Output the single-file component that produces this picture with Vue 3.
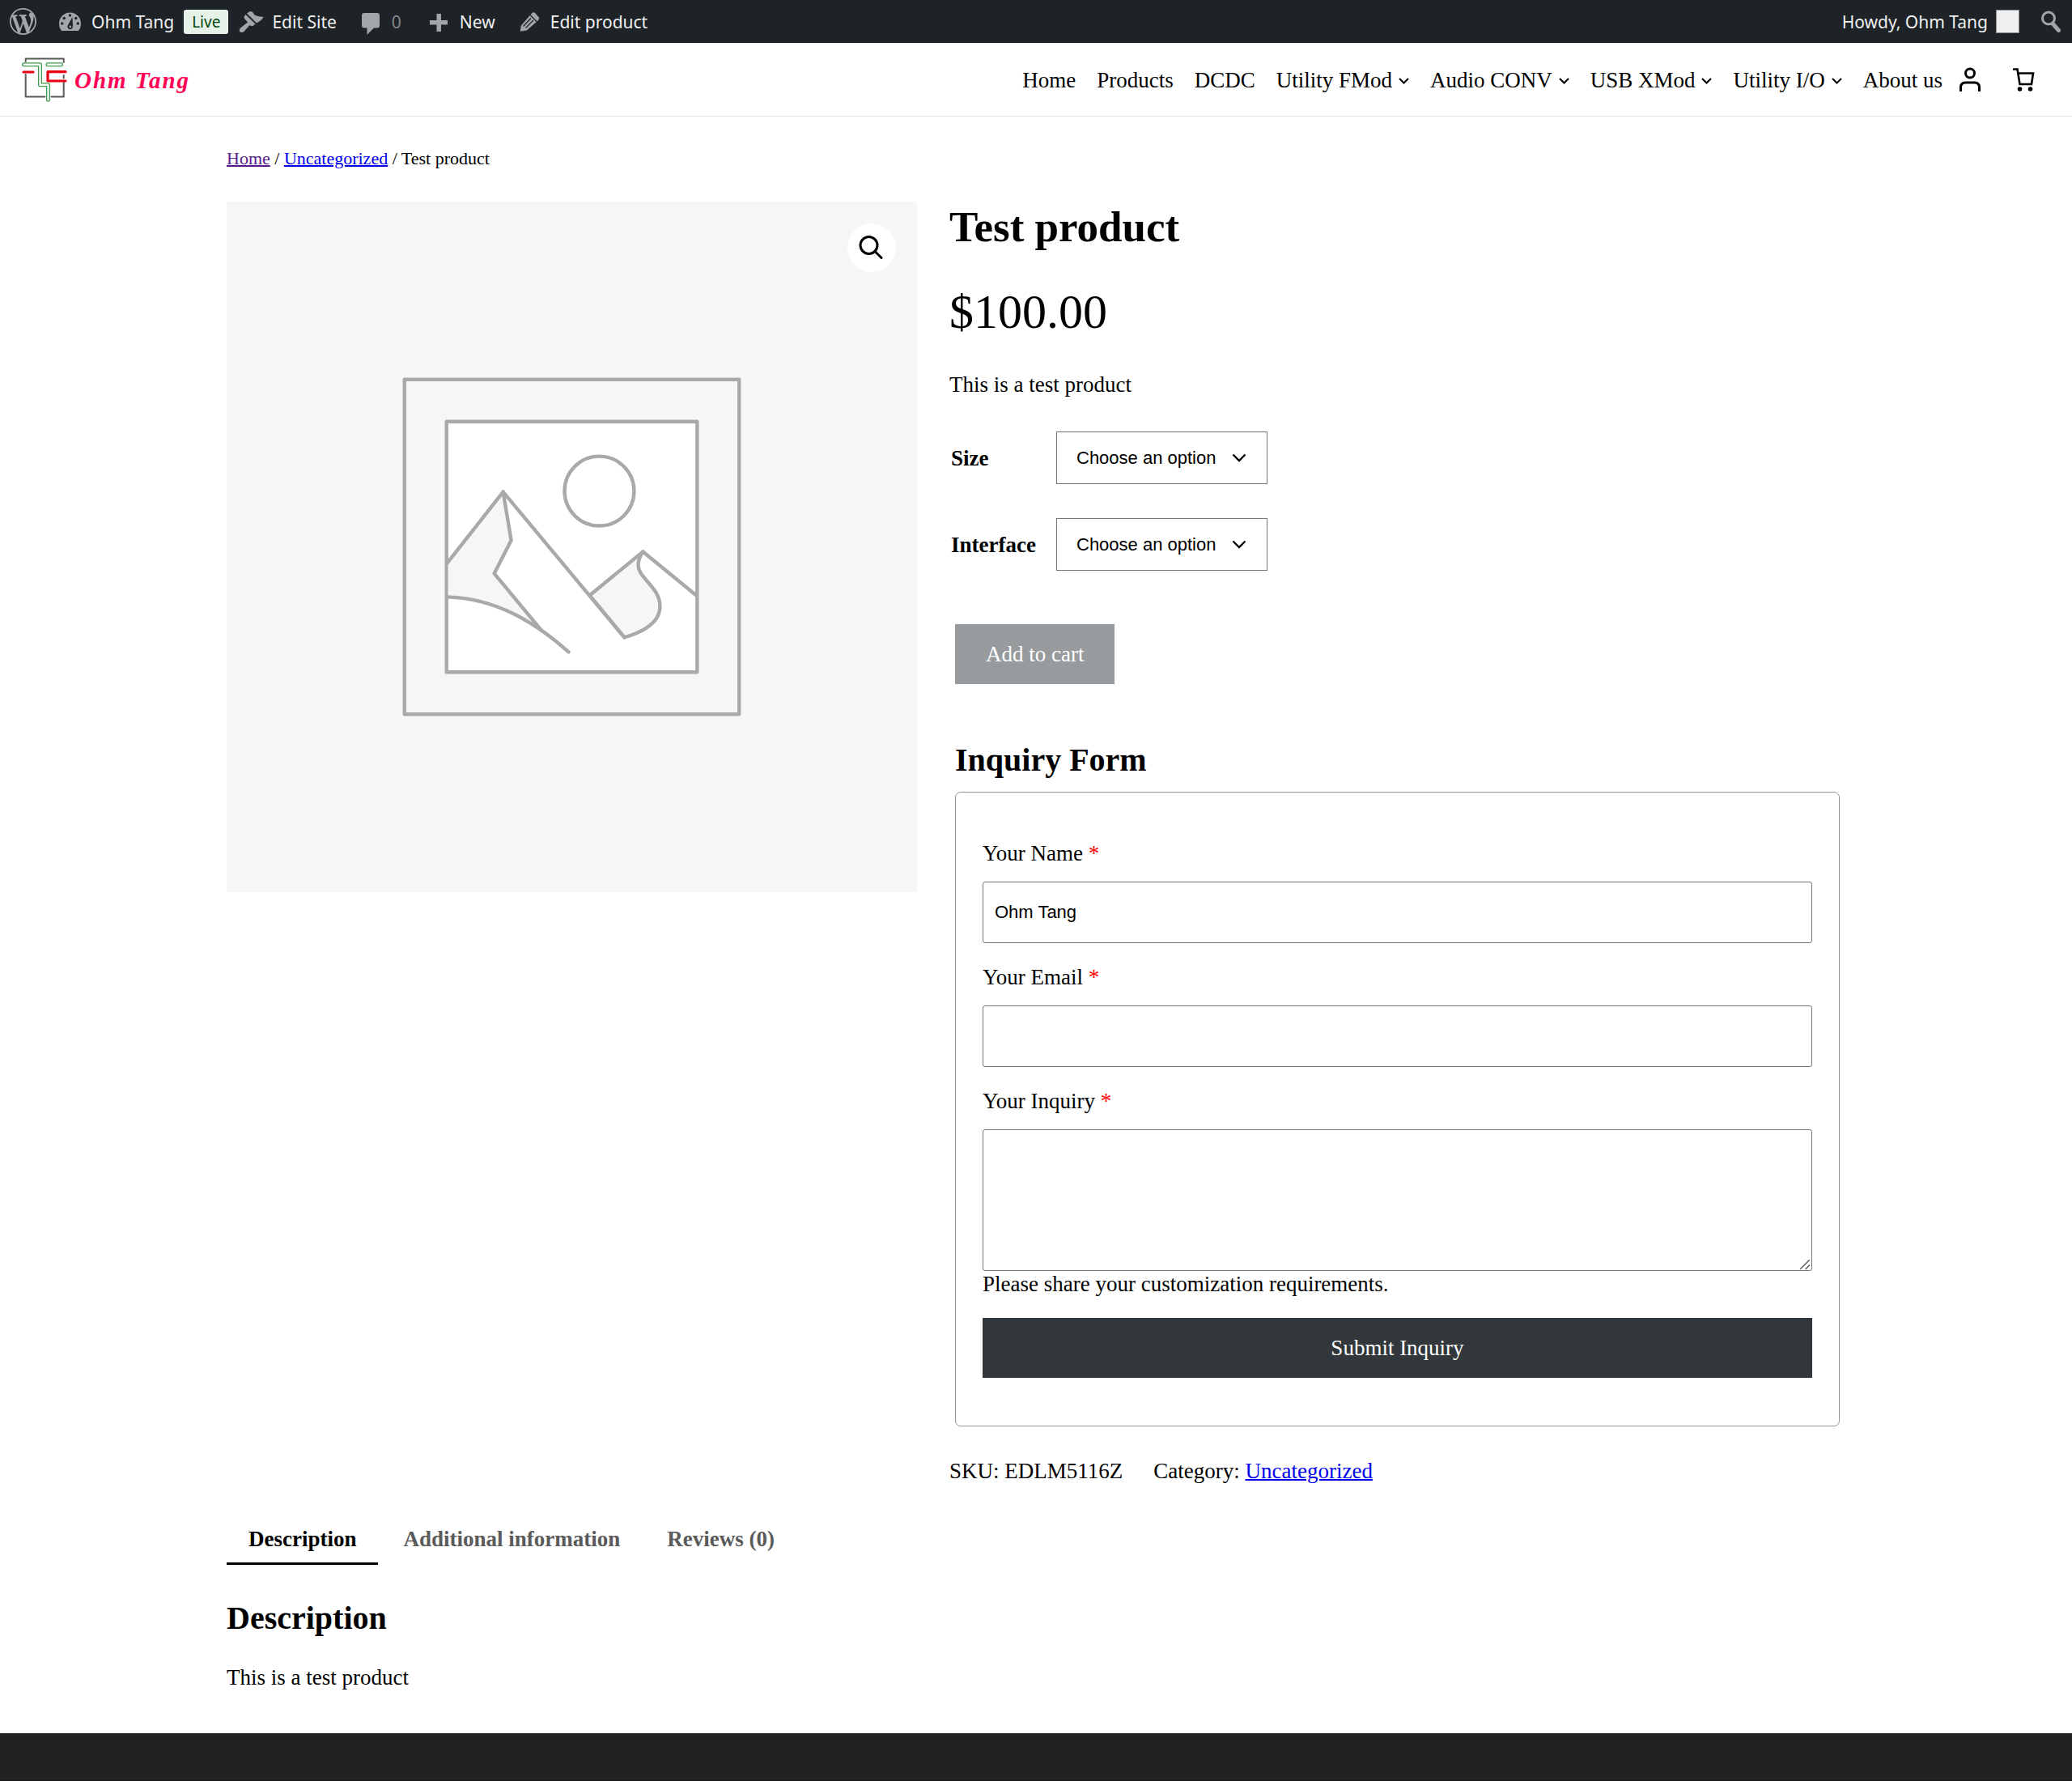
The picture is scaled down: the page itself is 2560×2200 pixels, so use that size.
<script setup>
import { ref } from 'vue'

const links = [
  { label: 'Home' },
  { label: 'Products' },
  { label: 'DCDC' },
  { label: 'Utility FMod', menu: true },
  { label: 'Audio CONV', menu: true },
  { label: 'USB XMod', menu: true },
  { label: 'Utility I/O', menu: true },
  { label: 'About us' },
]

const options = [
  { id: 'size', label: 'Size' },
  { id: 'interface', label: 'Interface' },
]

const tabs = ['Description', 'Additional information', 'Reviews (0)']
const activeTab = ref(0)

const name = ref('Ohm Tang')
const email = ref('')
const inquiry = ref('')
</script>

<template>
  <div class="page">
    <nav class="adminbar" aria-label="Toolbar">
      <div class="admin-group">
        <a class="admin-item" href="#" aria-label="About WordPress">
          <svg class="wp-logo" viewBox="0 0 20 20">
            <path fill="currentColor" d="M20 10C20 4.48 15.52 0 10 0S0 4.48 0 10s4.48 10 10 10 10-4.48 10-10zM7.78 15.37L4.37 6.22c.55-.02 1.17-.08 1.17-.08.5-.06.44-1.13-.06-1.11 0 0-1.45.11-2.37.11-.18 0-.37 0-.58-.01C4.12 2.69 6.87 1.11 10 1.11c2.33 0 4.45.87 6.05 2.34-.68-.11-1.65.39-1.65 1.58 0 .74.45 1.36.9 2.1.35.61.55 1.36.55 2.46 0 1.49-1.4 5-1.4 5l-3.03-8.37c.54-.02.82-.17.82-.17.5-.05.44-1.25-.06-1.22 0 0-1.44.12-2.38.12-.87 0-2.33-.12-2.33-.12-.5-.03-.56 1.2-.06 1.22l.92.08 1.26 3.41zM17.41 10c.24-.64.74-1.87.43-4.25.7 1.29 1.05 2.71 1.05 4.25 0 3.29-1.73 6.24-4.4 7.78.97-2.59 1.94-5.2 2.92-7.78zM6.1 18.09C3.12 16.65 1.11 13.53 1.11 10c0-1.3.23-2.48.72-3.59C3.25 10.3 4.67 14.2 6.1 18.09zm4.03-6.63l2.58 6.98c-.86.29-1.76.45-2.71.45-.79 0-1.57-.11-2.29-.33.81-2.38 1.62-4.74 2.42-7.1z" />
          </svg>
        </a>
        <div class="site-status">
          <a class="admin-item" href="#">
            <svg class="admin-icon" viewBox="0 0 32 32">
              <path fill="currentColor" d="M5 27C3 24.500 2 21.500 2 18a13.500 13.500 0 0 1 27 0c0 3.500-1 6.500-3 9z" />
              <g fill="#1d2327">
                <circle cx="15.500" cy="8" r="1.700" />
                <circle cx="8.200" cy="11.500" r="1.700" />
                <circle cx="22.800" cy="11.500" r="1.700" />
                <circle cx="5.700" cy="18" r="1.700" />
                <circle cx="25.300" cy="18" r="1.700" />
                <path d="M18.500 10l.5 12a3.300 3.300 0 1 1-6-2z" />
              </g>
              <circle cx="15.900" cy="22" r="1.400" fill="currentColor" />
            </svg>
            Ohm Tang
          </a>
          <span class="live">Live</span>
          <a class="admin-item" href="#">
            <svg class="admin-icon" viewBox="0 0 32 32" fill="currentColor">
              <path d="M11 5.500l4-2.500q2-.5 3.500 1.500l2 3q5 2 11 2.500-2 4-8.500 7.500z" />
              <path d="M9.500 7l12 11.500-3 2.500q-2 1-4-1L7.500 28q-3 2-5.500 0-1-2 1-4.500l9-7-4-4.500q-1-1.500 0-3z" />
            </svg>
            Edit Site
          </a>
        </div>
        <a class="admin-item muted" href="#">
          <svg class="admin-icon" viewBox="0 0 32 32" fill="currentColor">
            <path d="M8 5h16q3 0 3 3v12.500q0 3-3 3h-4L11.500 32v-8.500H8q-3 0-3-3V8q0-3 3-3z" />
          </svg>
          0
        </a>
        <a class="admin-item" href="#">
          <svg class="admin-icon" viewBox="0 0 32 32" fill="currentColor">
            <path d="M13.500 6h5.500v8h8v5.500h-8v8.500h-5.500v-8.500H5V14h8.500z" />
          </svg>
          New
        </a>
        <a class="admin-item" href="#">
          <svg class="admin-icon" viewBox="0 0 32 32">
            <path fill="currentColor" d="M4.700 27.700l1-7L19 5.500q2-2 4-.5l4.500 5q1.500 1.500-.5 4L13 26.500z" />
            <path d="M17 7.500l8 8M8.500 21.500L18 11.500M11.500 23.500L21 14" fill="none" stroke="#1d2327" stroke-width="1.300" />
          </svg>
          Edit product
        </a>
      </div>
      <div class="admin-group">
        <a class="admin-item" href="#">Howdy, Ohm Tang <span class="avatar"></span></a>
        <button class="admin-search" type="button" aria-label="Search">
          <svg viewBox="0 0 26 32" fill="none" stroke="currentColor" stroke-linecap="round">
            <circle cx="10" cy="11.500" r="7.500" stroke-width="3" />
            <path d="M15.500 18.500l7 8" stroke-width="5" />
          </svg>
        </button>
      </div>
    </nav>

    <header class="site-header">
      <a class="brand" href="#">
        <svg class="brand-mark" viewBox="0 0 56 56" fill="none" stroke-linecap="round" stroke-linejoin="round">
          <path d="M4.700 5V1.500h47V6M51.700 22v3.500M4.700 21v27.500h23.800M51.700 31v17.500H36.500" stroke="#595959" stroke-width="2" />
          <path d="M2.500 8.700h20v25h10v18.500M32 8.700h16.500" stroke="#3d9b4b" stroke-width="5" />
          <path d="M2.500 8.700h20v25h10v18.500M32 8.700h16.500" stroke="#fff" stroke-width="2.400" />
          <path d="M2 18h12M54 17.700H32V29h22" stroke="#e60012" stroke-width="3.200" />
        </svg>
        Ohm Tang
      </a>
      <div class="header-right">
        <nav class="menu" aria-label="Main">
          <a v-for="link in links" :key="link.label" href="#">
            {{ link.label }}
            <svg v-if="link.menu" class="chevron" viewBox="0 0 13 10" fill="none" stroke="currentColor" stroke-width="2">
              <path d="M1 3l5.500 5.500L12 3" />
            </svg>
          </a>
        </nav>
        <a class="header-icon" href="#" aria-label="My account">
          <svg viewBox="0 0 40 40" fill="none" stroke="currentColor" stroke-width="3">
            <circle cx="20" cy="11.500" r="5.500" />
            <path d="M8.500 34v-5q0-6 6-6h11q6 0 6 6v5" />
          </svg>
        </a>
        <a class="header-icon" href="#" aria-label="Cart">
          <svg viewBox="0 0 40 40" fill="none" stroke="currentColor" stroke-width="2.600">
            <path d="M7 6.500h5.500L15.500 25h14.500L32 11.500H13.500" />
            <circle cx="15.500" cy="31" r="2.800" fill="currentColor" stroke="none" />
            <circle cx="28.500" cy="31" r="2.800" fill="currentColor" stroke="none" />
          </svg>
        </a>
      </div>
    </header>

    <main class="container">
      <nav class="breadcrumb" aria-label="Breadcrumb">
        <a class="visited" href="#">Home</a> / <a href="#">Uncategorized</a> / Test product
      </nav>

      <div class="product">
        <div class="gallery">
          <svg class="placeholder" viewBox="0 0 854 854" role="img" aria-label="Awaiting product image">
            <g fill="#f5f7f7" stroke="#a7a9ab" stroke-width="4.400" stroke-linejoin="round" stroke-linecap="round">
              <rect x="220" y="220" width="414" height="414" />
              <rect x="272" y="272" width="310" height="310" fill="#fff" />
              <circle cx="461" cy="358" r="43" fill="#fff" />
              <path d="M274 447L342 359l10 60-21 41 59 71Q328 491 274 489z" stroke="none" />
              <path d="M273 447L342 359l10 60-21 41 59 71" fill="none" />
              <path d="M273 489Q350 491 423 557" fill="none" />
              <path d="M449 487l66-54q-10 15-3 26c7 12 25 23 24 43-1 19-20 30-44 37z" />
              <path d="M342 359L492 539M515 433l66 54" fill="none" />
            </g>
          </svg>
          <button class="zoom" type="button" aria-label="View full-screen image">
            <svg viewBox="0 0 60 60" fill="none" stroke="#000" stroke-width="3" stroke-linecap="round">
              <circle cx="26.500" cy="27" r="10.500" />
              <path d="M34 34.500l8 8" />
            </svg>
          </button>
        </div>

        <div class="summary">
          <h1>Test product</h1>
          <p class="price">$100.00</p>
          <p class="excerpt">This is a test product</p>

          <div class="options">
            <div v-for="option in options" :key="option.id" class="option">
              <label :for="option.id">{{ option.label }}</label>
              <div class="select">
                <select :id="option.id">
                  <option>Choose an option</option>
                </select>
                <svg viewBox="0 0 18 12" fill="none" stroke="#000" stroke-width="2.300">
                  <path d="M1.500 1.500L9 9l7.500-7.500" />
                </svg>
              </div>
            </div>
          </div>

          <div class="purchase">
            <button class="button add" type="button" disabled>Add to cart</button>
            <h2>Inquiry Form</h2>
            <form class="inquiry" @submit.prevent>
              <div class="field">
                <label for="name">Your Name <span class="required">*</span></label>
                <input id="name" v-model="name" type="text" />
              </div>
              <div class="field">
                <label for="email">Your Email <span class="required">*</span></label>
                <input id="email" v-model="email" type="email" />
              </div>
              <div class="field">
                <label for="inquiry">Your Inquiry <span class="required">*</span></label>
                <div class="resizable">
                  <textarea id="inquiry" v-model="inquiry"></textarea>
                  <svg viewBox="0 0 12 12" fill="none" stroke="#5f5f5f" stroke-width="1.500">
                    <path d="M0 12L12 0M6.500 12L12 6.500" />
                  </svg>
                </div>
                <p>Please share your customization requirements.</p>
              </div>
              <button class="button" type="submit">Submit Inquiry</button>
            </form>
          </div>

          <div class="meta">
            <span>SKU: EDLM5116Z</span>
            <span>Category: <a href="#">Uncategorized</a></span>
          </div>
        </div>
      </div>

      <div class="tabs" role="tablist">
        <button
          v-for="(tab, i) in tabs"
          :key="tab"
          type="button"
          role="tab"
          :aria-selected="activeTab === i"
          :class="{ active: activeTab === i }"
          @click="activeTab = i"
        >{{ tab }}</button>
      </div>

      <section class="description">
        <h2>Description</h2>
        <p>This is a test product</p>
      </section>
    </main>

    <footer class="site-footer"></footer>
  </div>
</template>

<style>
body {
  margin: 0;
}
</style>

<style scoped>
* {
  box-sizing: border-box;
}

.page {
  display: flex;
  flex-direction: column;
  min-height: 100vh;
  background: #fff;
  color: #000;
  font: 27px/32px "Liberation Serif", serif;
}

h1,
h2,
p {
  margin: 0;
}

h2 {
  font-size: 40px;
  line-height: 46px;
}

a {
  color: #0000ee;
  text-decoration-thickness: 2px;
}

svg {
  display: block;
}

button {
  border: 0;
  padding: 0;
  font: inherit;
  cursor: pointer;
}

/* Admin toolbar */
.adminbar {
  display: flex;
  justify-content: space-between;
  height: 53px;
  padding: 0 13px 0 12px;
  background: #1d2327;
  color: #f0f0f1;
  font: 21px/32px "Noto Sans", sans-serif;
}

.admin-group {
  display: flex;
  align-items: center;
  gap: 26px;
}

.site-status {
  display: flex;
  align-items: center;
  gap: 12px;
}

.admin-item {
  display: flex;
  align-items: center;
  gap: 10px;
  color: inherit;
  text-decoration: none;
}

.admin-item svg,
.admin-search {
  color: #a1a6ab;
}

.muted {
  margin-right: 4px;
  color: #85898d;
}

.wp-logo {
  width: 33px;
  height: 33px;
}

.admin-icon {
  width: 32px;
  height: 32px;
}

.live {
  height: 30px;
  padding: 0 10px;
  border-radius: 3px;
  background: #e6f2e8;
  color: #00450c;
  font-size: 19px;
  line-height: 30px;
}

.avatar {
  width: 29px;
  height: 29px;
  border: 1px solid #8c8f94;
  background: #f0f0f0;
}

.admin-search {
  width: 26px;
  height: 32px;
  background: none;
}

/* Site header */
.site-header {
  display: flex;
  align-items: center;
  justify-content: space-between;
  height: 91px;
  padding: 2px 40px 0 27px;
  border-bottom: 1px solid #e5e5e5;
}

.brand {
  display: flex;
  align-items: center;
  gap: 9px;
  color: #ff0055;
  font-size: 29px;
  font-style: italic;
  font-weight: bold;
  line-height: 28px;
  letter-spacing: 2px;
  text-decoration: none;
}

.brand-mark {
  width: 56px;
  height: 56px;
}

.header-right {
  display: flex;
  align-items: center;
  gap: 26px;
}

.menu {
  display: flex;
  gap: 26px;
  margin-right: -12px;
}

.menu a {
  display: flex;
  align-items: center;
  gap: 8px;
  color: inherit;
  text-decoration: none;
}

.chevron {
  width: 13px;
  height: 10px;
}

.header-icon {
  width: 40px;
  height: 40px;
  color: inherit;
}

/* Product */
.container {
  width: 100%;
  max-width: 2000px;
  margin: 0 auto;
  padding: 39px 0 53px;
}

.breadcrumb {
  font-size: 22px;
  line-height: 26px;
}

.breadcrumb .visited {
  color: #551a8b;
}

.product {
  display: flex;
  align-items: flex-start;
  gap: 40px;
  margin-top: 40px;
}

.gallery {
  position: relative;
  flex: 853 1 0;
  background: #f5f7f7;
}

.placeholder {
  width: 100%;
}

.zoom {
  position: absolute;
  top: 27px;
  right: 26px;
  width: 60px;
  height: 60px;
  border-radius: 50%;
  background: #fff;
}

.summary {
  flex: 1107 1 0;
}

h1 {
  font-size: 53px;
  line-height: 62px;
}

.price {
  margin: 40px 0;
  font-size: 60px;
  line-height: 68px;
}

.options {
  display: flex;
  flex-direction: column;
  gap: 42px;
  margin: 42px 0 66px;
}

.option {
  display: grid;
  grid-template-columns: 130px auto;
  justify-content: start;
  align-items: center;
  padding-left: 2px;
}

.option label {
  font-weight: bold;
}

.select {
  position: relative;
}

select {
  appearance: none;
  width: 261px;
  height: 65px;
  padding: 0 24px;
  border: 1px solid #767676;
  border-radius: 0;
  background: #fff;
  color: #000;
  font: 22px/26px "Liberation Sans", sans-serif;
}

.select svg {
  position: absolute;
  top: 27px;
  right: 26px;
  width: 18px;
  height: 12px;
  pointer-events: none;
}

.purchase {
  margin: 0 7px;
}

.purchase h2 {
  margin: 71px 0 16px;
}

.button {
  height: 74px;
  padding: 0 38px;
  background: #32373c;
  color: #fff;
}

.button.add {
  display: block;
  background: #979b9d;
}

.inquiry {
  display: flex;
  flex-direction: column;
  gap: 26px;
  padding: 59px 33px;
  border: 1px solid #949494;
  border-radius: 7px;
}

.field {
  display: flex;
  flex-direction: column;
}

.field label {
  margin-bottom: 19px;
}

.required {
  color: #f00;
}

.field input,
.field textarea {
  display: block;
  width: 100%;
  border: 1px solid #767676;
  border-radius: 3px;
  background: #fff;
  color: #000;
  font: 22px/26px "Liberation Sans", sans-serif;
}

.field input {
  height: 76px;
  padding: 0 14px;
}

.field textarea {
  height: 175px;
  padding: 14px;
  resize: vertical;
}

.field textarea::-webkit-resizer {
  display: none;
}

.resizable {
  position: relative;
}

.resizable svg {
  position: absolute;
  right: 3px;
  bottom: 2px;
  width: 12px;
  height: 12px;
  pointer-events: none;
}

.meta {
  display: flex;
  gap: 38px;
  margin-top: 39px;
}

/* Tabs */
.tabs {
  display: flex;
  gap: 4px;
  margin-top: 40px;
}

.tabs button {
  padding: 12px 27px 13px;
  border-bottom: 3px solid transparent;
  background: none;
  color: #5a5a5a;
  font-weight: bold;
}

.tabs .active {
  border-color: #000;
  color: #000;
}

.description {
  display: flex;
  flex-direction: column;
  gap: 34px;
  margin-top: 43px;
}

.site-footer {
  flex: 1 0 auto;
  min-height: 59px;
  border-bottom: 1px solid #1c181d;
  background: #222;
}
</style>
